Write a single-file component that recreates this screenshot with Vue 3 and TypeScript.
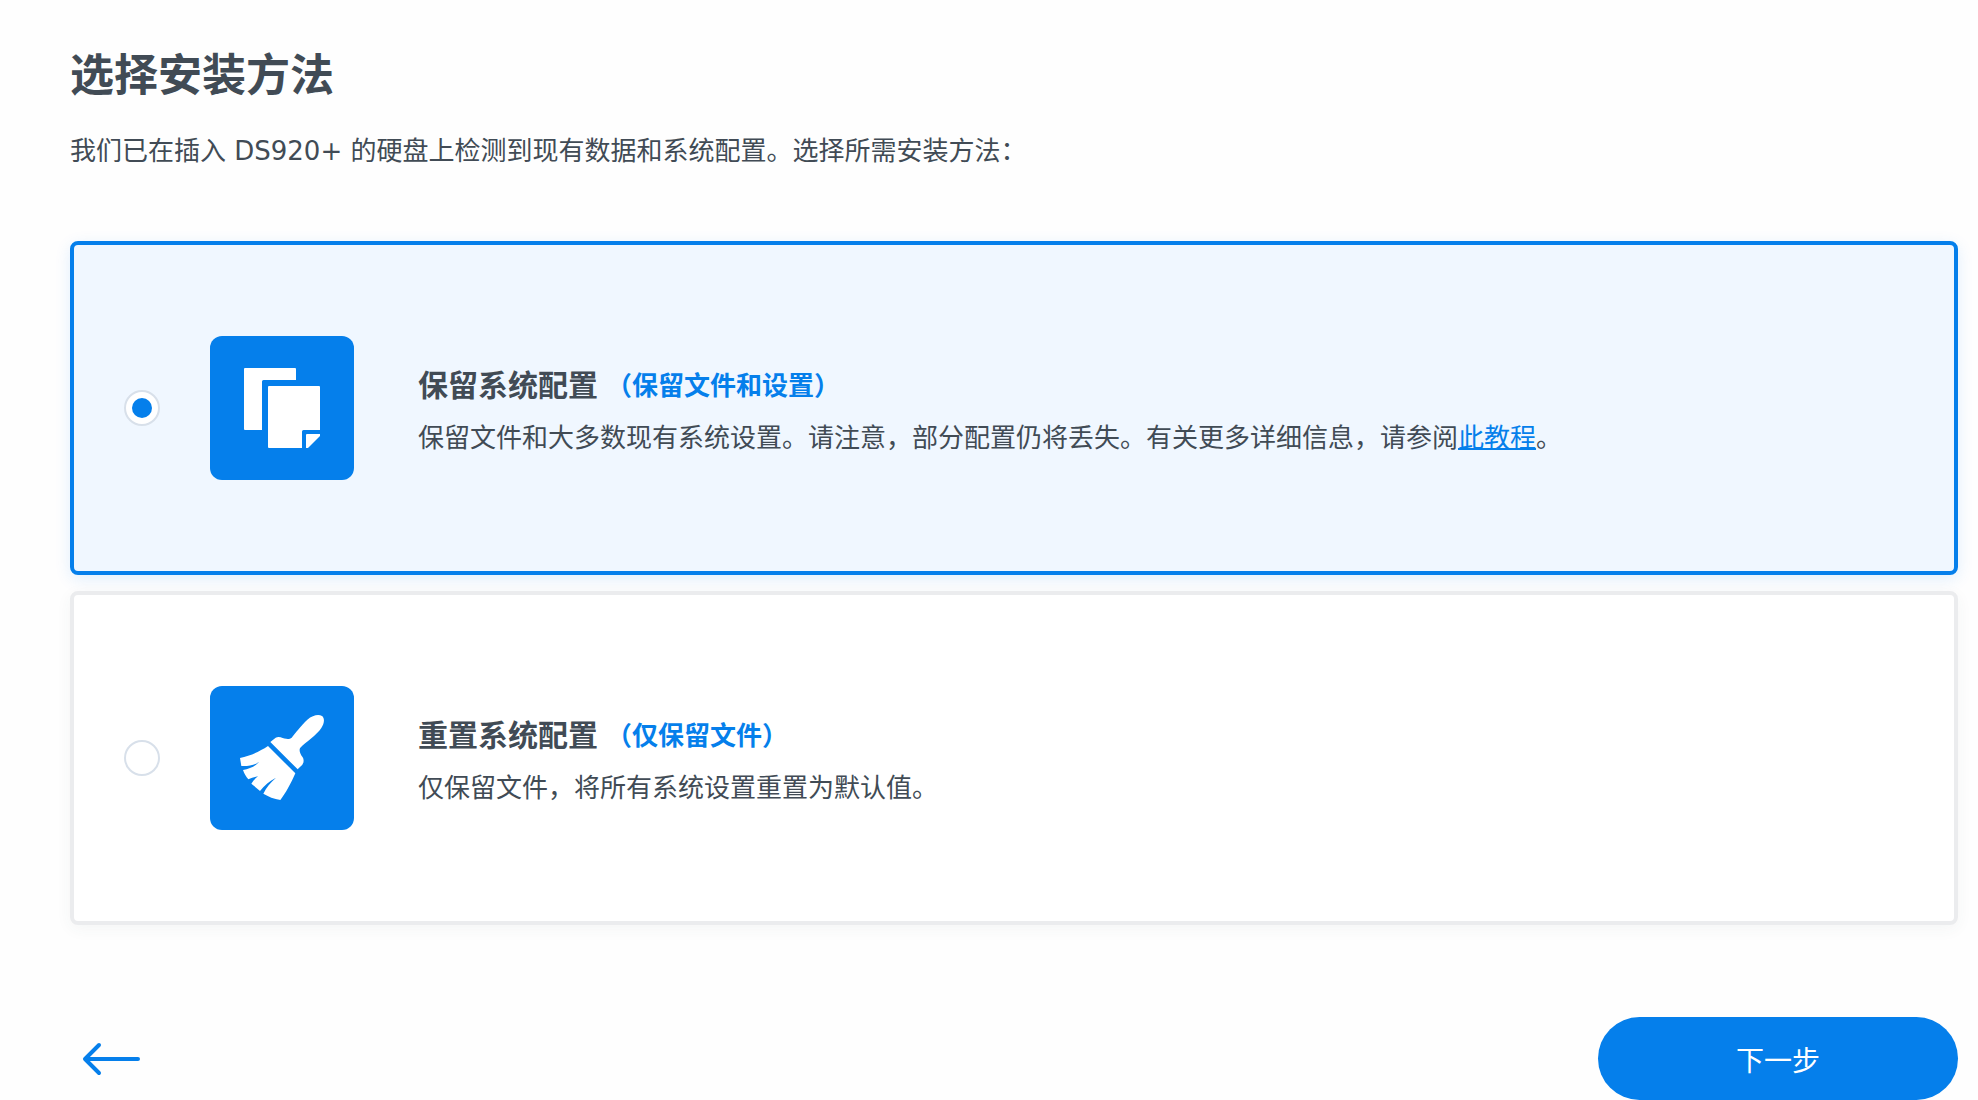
<script setup lang="ts">
import { ref } from 'vue'

type Method = 'keep' | 'reset'

const selected = ref<Method>('keep')
</script>

<template>
  <main class="page">
    <h1 class="title">选择安装方法</h1>
    <p class="intro">我们已在插入 DS920+ 的硬盘上检测到现有数据和系统配置。选择所需安装方法：</p>

    <form class="form" @submit.prevent>
      <div class="options">
        <label class="card" :class="{ selected: selected === 'keep' }">
          <input v-model="selected" class="radio" type="radio" name="method" value="keep" />
          <svg class="icon" viewBox="0 0 144 144" aria-hidden="true">
            <rect class="tile" width="144" height="144" rx="12" />
            <path
              class="glyph"
              d="M35 32H85a1 1 0 0 1 1 1V44H53.500a1.500 1.500 0 0 0-1.500 1.500V94H35a1 1 0 0 1-1-1V33a1 1 0 0 1 1-1Z"
            />
            <path
              class="glyph"
              d="M59 50H109a1 1 0 0 1 1 1V94H93.500a1.500 1.500 0 0 0-1.500 1.500V112H59a1 1 0 0 1-1-1V51a1 1 0 0 1 1-1Z"
            />
            <path class="glyph" d="M97 98H110V100L98.500 111.500Q98 112 97 112H96V99a1 1 0 0 1 1-1Z" />
          </svg>
          <span class="body">
            <span class="heading">
              <span class="name">保留系统配置</span>
              <span class="tag">（保留文件和设置）</span>
            </span>
            <span class="desc"
              >保留文件和大多数现有系统设置。请注意，部分配置仍将丢失。有关更多详细信息，请参阅<a
                class="link"
                href="#tutorial"
                >此教程</a
              >。</span
            >
          </span>
        </label>

        <label class="card" :class="{ selected: selected === 'reset' }">
          <input v-model="selected" class="radio" type="radio" name="method" value="reset" />
          <svg class="icon" viewBox="60 48 432 432" aria-hidden="true">
            <rect class="tile" x="60" y="48" width="432" height="432" rx="36" />
            <path
              class="glyph"
              d="M241 216L257 203Q264 199 272 202C286 207 298 209 305 203C315 191 333 166 352 149C368 136 385 132 396 138C405 145 403 160 394 174C380 196 347 216 331 233C326 239 330 252 338 262C342 268 342 277 337 284L323 298Z"
            />
            <path
              class="glyph"
              d="M234 228L316 310C303 340 287 370 271 390C252 387 235 380 220 371C229 352 241 338 258 323C238 333 224 346 210 363L184 341C190 332 196 325 204 319C194 321 185 324 175 328C168 320 163 311 159 300C178 297 195 290 207 276C192 286 173 289 154 288L150 264C180 258 208 245 234 228Z"
            />
          </svg>
          <span class="body">
            <span class="heading">
              <span class="name">重置系统配置</span>
              <span class="tag">（仅保留文件）</span>
            </span>
            <span class="desc">仅保留文件，将所有系统设置重置为默认值。</span>
          </span>
        </label>
      </div>

      <footer class="actions">
        <button class="back" type="button" aria-label="返回">
          <svg class="arrow" viewBox="0 0 60 36" aria-hidden="true">
            <path d="M19 4L5 18L19 32M6 18H58" />
          </svg>
        </button>
        <button class="next" type="submit">下一步</button>
      </footer>
    </form>
  </main>
</template>

<style>
body {
  margin: 0;
  background: #fefefe;
}
</style>

<style scoped>
.page {
  box-sizing: border-box;
  padding: 50px 20px 0 70px;
  color: #414b55;
  font-family: 'DejaVu Sans', 'Noto Sans CJK SC', sans-serif;
}

.title {
  margin: 0;
  font-size: 44px;
  font-weight: 700;
  line-height: 52px;
}

.intro {
  margin: 29px 0 0;
  font-size: 26px;
  line-height: 40px;
}

.form {
  margin-top: 70px;
}

.options {
  display: flex;
  flex-direction: column;
  gap: 16px;
}

.card {
  box-sizing: border-box;
  display: flex;
  align-items: center;
  min-height: 334px;
  padding: 20px 50px;
  border: 4px solid #ebecee;
  border-radius: 8px;
  background: #fff;
  box-shadow: 0 4px 16px rgba(65, 75, 85, 0.05);
  cursor: pointer;
}

.card.selected {
  border-color: #057feb;
  background: #f0f7ff;
  box-shadow: 0 4px 16px rgba(5, 127, 235, 0.12);
}

.radio {
  appearance: none;
  display: grid;
  place-items: center;
  flex: none;
  box-sizing: border-box;
  width: 36px;
  height: 36px;
  margin: 0;
  border: 2px solid #d8e0ea;
  border-radius: 50%;
  background: #fff;
}

.radio:checked::before {
  content: '';
  width: 20px;
  height: 20px;
  border-radius: 50%;
  background: #057feb;
}

.icon {
  flex: none;
  width: 144px;
  height: 144px;
  margin: 0 64px 0 50px;
}

.tile {
  fill: #057feb;
}

.glyph {
  fill: #fff;
}

.body {
  display: flex;
  flex-direction: column;
  gap: 12px;
  padding-top: 8px;
}

.heading {
  display: flex;
  align-items: center;
  gap: 8px;
  line-height: 40px;
}

.name {
  font-size: 30px;
  font-weight: 700;
}

.tag {
  color: #057feb;
  font-size: 26px;
  font-weight: 700;
}

.desc {
  font-size: 26px;
  line-height: 40px;
}

.link {
  color: #057feb;
  text-decoration: underline;
  text-decoration-thickness: 2px;
}

.actions {
  display: flex;
  align-items: center;
  justify-content: space-between;
  margin-top: 92px;
}

.back {
  padding: 0 10px;
  border: 0;
  background: none;
  cursor: pointer;
}

.arrow {
  display: block;
  width: 60px;
  height: 36px;
  fill: none;
  stroke: #057feb;
  stroke-width: 4;
  stroke-linecap: round;
  stroke-linejoin: round;
}

.next {
  width: 360px;
  height: 83px;
  border: 0;
  border-radius: 42px;
  background: #057feb;
  color: #fff;
  font-family: inherit;
  font-size: 28px;
  cursor: pointer;
}
</style>
